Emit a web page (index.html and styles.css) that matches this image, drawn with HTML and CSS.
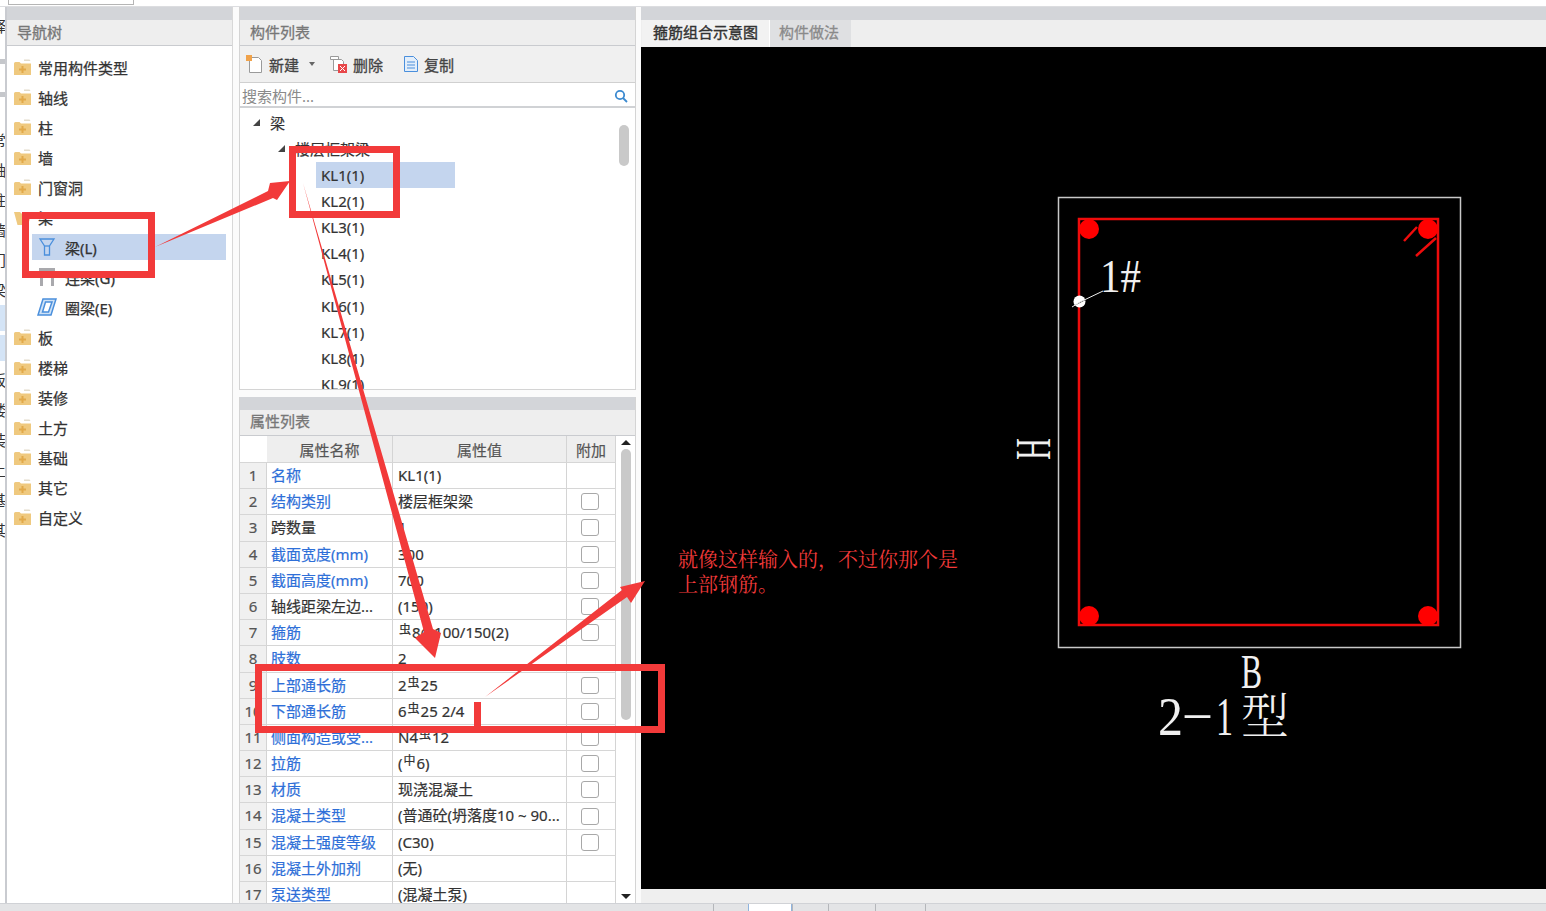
FILE: index.html
```html
<!DOCTYPE html>
<html lang="zh-CN">
<head>
    <meta charset="UTF-8">
    <title>箍筋组合示意图</title>
    <link rel="stylesheet" href="styles.css">
</head>
<body>
    <svg width="0" height="0" class="defs">
        <symbol id="folder" viewBox="0 0 17 16">
            <path d="M10 0.5h5.500l1 1.500h-6.500z" fill="#e3dccb"/>
            <path d="M0 4.500q0-1.500 1.500-1.500h4l1.500 1.500h10v11.500h-17z" fill="#efc97f"/>
            <path d="M7.500 7h2v2.500h2.500v2h-2.500v2.500h-2v-2.500h-2.500v-2h2.500z" fill="#e2a94a"/>
        </symbol>
    </svg>

    <div class="topbar"><div class="topinput"></div></div>

    <div class="main">
        <div class="sliver">
            <span class="sl-char sl-first">释</span>
            <span class="sl-rule"></span>
            <span class="sl-rule"></span>
            <span class="sl-char">常</span>
            <span class="sl-char">轴</span>
            <span class="sl-char">柱</span>
            <span class="sl-char">墙</span>
            <span class="sl-char">门</span>
            <span class="sl-char">梁</span>
            <span class="sl-blue"></span>
            <span class="sl-blue"></span>
            <span class="sl-char">板</span>
            <span class="sl-char">楼</span>
            <span class="sl-char">装</span>
            <span class="sl-char">土</span>
            <span class="sl-char">基</span>
            <span class="sl-char">其</span>
        </div>

        <!-- 导航树 -->
        <div class="panel nav">
            <div class="band"></div>
            <div class="head">导航树</div>
            <div class="nav-list">
                <div class="nav-row"><svg class="folder"><use href="#folder"/></svg>常用构件类型</div>
                <div class="nav-row"><svg class="folder"><use href="#folder"/></svg>轴线</div>
                <div class="nav-row"><svg class="folder"><use href="#folder"/></svg>柱</div>
                <div class="nav-row"><svg class="folder"><use href="#folder"/></svg>墙</div>
                <div class="nav-row"><svg class="folder"><use href="#folder"/></svg>门窗洞</div>
                <div class="nav-row"><svg class="folder" viewBox="0 0 17 16"><path d="M0 3h6l1.500 1.500h7v2h2.500l-3 9.500h-10.500z" fill="#efc97f"/></svg>梁</div>
                <div class="nav-row nav-sub nav-active">
                    <svg class="sub-icon" viewBox="0 0 20 20" fill="none" stroke="#4a8fdc" stroke-width="1.300"><path d="M3 2h14l-4.500 7v9h-5v-9z"/><path d="M7.500 9h5"/></svg>梁(L)
                </div>
                <div class="nav-row nav-sub">
                    <svg class="sub-icon" viewBox="0 0 20 20"><path d="M2 1h16v3h-16zM3 4h3v15h-3zM14 4h3v15h-3z" fill="#a9a9ad"/></svg>连梁(G)
                </div>
                <div class="nav-row nav-sub">
                    <svg class="sub-icon" viewBox="0 0 20 20" fill="#cfe2f6" stroke="#4a8fdc" stroke-width="1.500"><path d="M6 2h13l-5 16h-13z"/><path d="M8.500 5h6.500l-3.500 10h-6z" fill="#fff"/></svg>圈梁(E)
                </div>
                <div class="nav-row"><svg class="folder"><use href="#folder"/></svg>板</div>
                <div class="nav-row"><svg class="folder"><use href="#folder"/></svg>楼梯</div>
                <div class="nav-row"><svg class="folder"><use href="#folder"/></svg>装修</div>
                <div class="nav-row"><svg class="folder"><use href="#folder"/></svg>土方</div>
                <div class="nav-row"><svg class="folder"><use href="#folder"/></svg>基础</div>
                <div class="nav-row"><svg class="folder"><use href="#folder"/></svg>其它</div>
                <div class="nav-row"><svg class="folder"><use href="#folder"/></svg>自定义</div>
            </div>
        </div>

        <div class="middle">
            <!-- 构件列表 -->
            <div class="panel parts">
                <div class="band"></div>
                <div class="head">构件列表</div>
                <div class="toolbar">
                    <span class="tool tool-new">
                        <svg class="tool-icon" viewBox="0 0 18 18" fill="#fff" stroke="#9a9a9a"><path d="M3.500 2.500h9l3 3v12h-12z"/><rect x="0" y="0" width="6" height="6" fill="#f0a24a" stroke="none"/></svg>新建<i class="caret"></i>
                    </span>
                    <span class="tool tool-del">
                        <svg class="tool-icon" viewBox="0 0 18 18" fill="#fff" stroke="#9a9a9a"><path d="M1.500 1.500h8v3h-8zM4.500 4.500h8l2 2v9h-10z"/><rect x="9" y="9" width="9" height="9" fill="#e8474a" stroke="none"/><path d="M11 11l5 5M16 11l-5 5" stroke="#fff"/></svg>删除
                    </span>
                    <span class="tool tool-copy">
                        <svg class="tool-icon" viewBox="0 0 18 18" fill="#e3eefa" stroke="#4a8fdc"><path d="M2.500 1.500h9l4 4v11h-13z"/><path d="M5 7h8M5 10h8M5 13h8" fill="none"/></svg>复制
                    </span>
                </div>
                <div class="search">
                    <span>搜索构件...</span>
                    <svg class="search-icon" viewBox="0 0 14 14" fill="none" stroke="#3b8ad0" stroke-width="1.800"><circle cx="6" cy="6" r="4.200"/><path d="M9 9l4 4"/></svg>
                </div>
                <div class="tree">
                    <div class="tree-row lvl-1"><i class="tri"></i>梁</div>
                    <div class="tree-row lvl-2"><i class="tri"></i>楼层框架梁</div>
                    <div class="tree-row lvl-3"><span class="leaf leaf-on">KL1(1)</span></div>
                    <div class="tree-row lvl-3"><span class="leaf">KL2(1)</span></div>
                    <div class="tree-row lvl-3"><span class="leaf">KL3(1)</span></div>
                    <div class="tree-row lvl-3"><span class="leaf">KL4(1)</span></div>
                    <div class="tree-row lvl-3"><span class="leaf">KL5(1)</span></div>
                    <div class="tree-row lvl-3"><span class="leaf">KL6(1)</span></div>
                    <div class="tree-row lvl-3"><span class="leaf">KL7(1)</span></div>
                    <div class="tree-row lvl-3"><span class="leaf">KL8(1)</span></div>
                    <div class="tree-row lvl-3"><span class="leaf">KL9(1)</span></div>
                    <div class="tree-thumb"></div>
                </div>
            </div>

            <!-- 属性列表 -->
            <div class="panel props">
                <div class="band"></div>
                <div class="head">属性列表</div>
                <div class="prop-wrap">
                    <div class="prop-table">
                        <div class="prop-row prop-head"><div class="c-idx"></div><div>属性名称</div><div>属性值</div><div>附加</div></div>
                        <div class="prop-row"><div class="c-idx">1</div><div class="c-name">名称</div><div class="c-val">KL1(1)</div><div class="c-add"></div></div>
                        <div class="prop-row"><div class="c-idx">2</div><div class="c-name">结构类别</div><div class="c-val">楼层框架梁</div><div class="c-add"><i class="check"></i></div></div>
                        <div class="prop-row"><div class="c-idx">3</div><div class="c-name c-plain">跨数量</div><div class="c-val">1</div><div class="c-add"><i class="check"></i></div></div>
                        <div class="prop-row"><div class="c-idx">4</div><div class="c-name">截面宽度(mm)</div><div class="c-val">300</div><div class="c-add"><i class="check"></i></div></div>
                        <div class="prop-row"><div class="c-idx">5</div><div class="c-name">截面高度(mm)</div><div class="c-val">700</div><div class="c-add"><i class="check"></i></div></div>
                        <div class="prop-row"><div class="c-idx">6</div><div class="c-name c-plain">轴线距梁左边...</div><div class="c-val">(150)</div><div class="c-add"><i class="check"></i></div></div>
                        <div class="prop-row"><div class="c-idx">7</div><div class="c-name">箍筋</div><div class="c-val"><sup class="bar">虫</sup>8@100/150(2)</div><div class="c-add"><i class="check"></i></div></div>
                        <div class="prop-row"><div class="c-idx">8</div><div class="c-name">肢数</div><div class="c-val">2</div><div class="c-add"></div></div>
                        <div class="prop-row"><div class="c-idx">9</div><div class="c-name">上部通长筋</div><div class="c-val">2<sup class="bar">虫</sup>25</div><div class="c-add"><i class="check"></i></div></div>
                        <div class="prop-row"><div class="c-idx">10</div><div class="c-name">下部通长筋</div><div class="c-val">6<sup class="bar">虫</sup>25 2/4</div><div class="c-add"><i class="check"></i></div></div>
                        <div class="prop-row"><div class="c-idx">11</div><div class="c-name">侧面构造或受...</div><div class="c-val">N4<sup class="bar">虫</sup>12</div><div class="c-add"><i class="check"></i></div></div>
                        <div class="prop-row"><div class="c-idx">12</div><div class="c-name">拉筋</div><div class="c-val">(<sup class="bar">中</sup>6)</div><div class="c-add"><i class="check"></i></div></div>
                        <div class="prop-row"><div class="c-idx">13</div><div class="c-name">材质</div><div class="c-val">现浇混凝土</div><div class="c-add"><i class="check"></i></div></div>
                        <div class="prop-row"><div class="c-idx">14</div><div class="c-name">混凝土类型</div><div class="c-val">(普通砼(坍落度10 ~ 90...</div><div class="c-add"><i class="check"></i></div></div>
                        <div class="prop-row"><div class="c-idx">15</div><div class="c-name">混凝土强度等级</div><div class="c-val">(C30)</div><div class="c-add"><i class="check"></i></div></div>
                        <div class="prop-row"><div class="c-idx">16</div><div class="c-name">混凝土外加剂</div><div class="c-val">(无)</div><div class="c-add"></div></div>
                        <div class="prop-row"><div class="c-idx">17</div><div class="c-name">泵送类型</div><div class="c-val">(混凝土泵)</div><div class="c-add"></div></div>
                    </div>
                    <div class="prop-scroll">
                        <i class="arrow-up"></i>
                        <div class="prop-thumb"></div>
                        <i class="arrow-down"></i>
                    </div>
                </div>
            </div>
        </div>

        <!-- 箍筋组合示意图 -->
        <div class="panel drawing">
            <div class="band"></div>
            <div class="tabs">
                <div class="tab tab-on">箍筋组合示意图</div>
                <div class="tab">构件做法</div>
            </div>
            <div class="canvas">
                <svg class="cad" viewBox="641 47 905 842">
                    <rect x="1058.500" y="197.500" width="402" height="450" fill="none" stroke="#c8c8c8" stroke-width="1.500"/>
                    <rect x="1079" y="219" width="359" height="406" fill="none" stroke="#ee0c0c" stroke-width="2.500"/>
                    <circle cx="1089" cy="229" r="10" fill="#f00"/>
                    <circle cx="1428" cy="229" r="10" fill="#f00"/>
                    <circle cx="1089" cy="616" r="10" fill="#f00"/>
                    <circle cx="1428" cy="616" r="10" fill="#f00"/>
                    <path d="M1417 227l-13 14M1436 238l-20 18" stroke="#ee0c0c" stroke-width="2.500"/>
                    <circle cx="1079.500" cy="301.500" r="6" fill="#fff"/>
                    <path d="M1072 307l8-5 23-11" stroke="#eee" stroke-width="1"/>
                    <text class="cad-text" x="1100" y="292" font-size="46" textLength="41" lengthAdjust="spacingAndGlyphs">1#</text>
                    <text class="cad-text" x="1241" y="688" font-size="48" textLength="21" lengthAdjust="spacingAndGlyphs">B</text>
                    <text class="cad-text" x="1158" y="735" font-size="54" textLength="25" lengthAdjust="spacingAndGlyphs">2</text>
                    <text class="cad-text" x="1185" y="729" font-size="54" textLength="25" lengthAdjust="spacingAndGlyphs">–</text>
                    <text class="cad-text" x="1216" y="735" font-size="54" textLength="17" lengthAdjust="spacingAndGlyphs">1</text>
                    <text class="cad-text cad-cjk" x="1241" y="733" font-size="48">型</text>
                    <text class="cad-text" transform="translate(1050 460) rotate(-90)" font-size="50" textLength="22" lengthAdjust="spacingAndGlyphs">H</text>
                </svg>
                <div class="note">就像这样输入的，不过你那个是<br>上部钢筋。</div>
            </div>
            <div class="drawing-foot"></div>
        </div>
    </div>

    <div class="bottombar">
        <span class="bottom-cell cell-30"></span>
        <span class="bottom-cell bottom-tab"></span>
        <span class="bottom-cell cell-36"></span>
        <span class="bottom-cell cell-47"></span>
        <span class="bottom-cell cell-50"></span>
        <span class="bottom-cell cell-95"></span>
    </div>

    <!-- 截图上的红色标注 -->
    <svg class="marks" viewBox="0 0 1546 911">
        <g fill="none" stroke="#f23a3a" stroke-width="7">
            <rect x="25.500" y="215.500" width="126" height="59"/>
            <rect x="292.500" y="149.500" width="104" height="65"/>
            <rect x="258.500" y="667.500" width="403" height="62"/>
        </g>
        <g fill="#f23a3a">
            <rect x="474" y="702" width="7" height="28"/>
            <polygon points="155,247 268,191 270,183 290,181 277,200 273,198"/>
            <polygon points="303,183 424,632 415,638 435,658 441,633 433,629"/>
            <polygon points="485,697 622,590 620,587 645,581 631,603 627,597"/>
        </g>
    </svg>
</body>
</html>
```
FILE: styles.css
```css
* { margin: 0; padding: 0; box-sizing: border-box; }
body {
    width: 1546px;
    height: 911px;
    overflow: hidden;
    position: relative;
    background: #fff;
    color: #333;
    font-family: "Noto Sans", "Noto Sans CJK SC", sans-serif;
    font-size: 15px;
}
.defs { position: absolute; }

.topbar {
    height: 7px;
    background: #fff;
    border-bottom: 1px solid #dcdde0;
    padding-left: 8px;
}
.topinput {
    width: 126px;
    height: 5px;
    background: #fff;
    border: 1px solid #b5b5b5;
    border-top: none;
}

.main { display: flex; height: 896px; background: #fbfbfb; }

.sliver {
    width: 7px;
    flex-shrink: 0;
    border-right: 2px solid #c9cbd0;
    background: #fff;
    overflow: hidden;
    display: flex;
    flex-direction: column;
}
.sl-char {
    height: 30px;
    flex-shrink: 0;
    line-height: 30px;
    text-indent: -9px;
    white-space: nowrap;
    color: #333;
}
.sl-first { margin-top: 4px; margin-bottom: 18px; }
.sl-rule { height: 5px; flex-shrink: 0; background: #c5c7cb; margin-bottom: 28px; }
.sl-blue { height: 26px; flex-shrink: 0; background: #d4e4f6; margin-bottom: 4px; }

.panel { display: flex; flex-direction: column; background: #fff; }
.band { height: 13px; flex-shrink: 0; background: #d3d5d9; }
.head {
    height: 26px;
    flex-shrink: 0;
    line-height: 25px;
    padding-left: 10px;
    background: #eeeeee;
    border-bottom: 1px solid #c9cbcf;
    color: #777;
    -webkit-text-stroke: 0.3px #777;
}
.props .head { line-height: 23px; }

/* nav */
.nav { width: 226px; margin-right: 6px; border-right: 1px solid #d8d8d8; }
.nav-list { padding-top: 6px; flex: 1; }
.nav-row {
    height: 30px;
    display: flex;
    align-items: center;
    padding-left: 7px;
    -webkit-text-stroke: 0.25px #333;
}
.folder { width: 17px; height: 16px; margin-right: 7px; flex-shrink: 0; }
.nav-sub { padding-left: 30px; margin-right: 6px; }
.nav-active { height: 26px; margin: 2px 6px 2px 25px; padding-left: 5px; background: #c4d5ee; }
.sub-icon { width: 20px; height: 20px; margin-right: 8px; flex-shrink: 0; }

/* middle column */
.middle { width: 397px; flex-shrink: 0; margin-right: 5px; display: flex; flex-direction: column; gap: 7px; }
.parts { height: 383px; border: 1px solid #d4d4d4; border-top: none; }
.props { flex: 1; min-height: 0; border-left: 1px solid #d4d4d4; border-right: 1px solid #d4d4d4; }

.toolbar {
    height: 37px;
    flex-shrink: 0;
    background: #f0f0f0;
    display: flex;
    align-items: center;
    padding-left: 6px;
    border-bottom: 1px solid #d0d0d0;
    color: #444;
    -webkit-text-stroke: 0.3px #444;
}
.tool { display: flex; align-items: center; }
.tool-icon { width: 18px; height: 18px; margin-right: 4px; }
.tool-new { margin-right: 14px; }
.tool-new .tool-icon { margin-right: 5px; }
.tool-del { margin-right: 19px; }
.tool-del .tool-icon { margin-right: 6px; }
.caret {
    width: 0;
    height: 0;
    margin-left: 10px;
    border: 3.500px solid transparent;
    border-top: 4px solid #666;
    border-bottom: none;
}

.search {
    height: 25px;
    flex-shrink: 0;
    display: flex;
    align-items: center;
    justify-content: space-between;
    padding: 2px 7px 0 2px;
    border-bottom: 2px solid #d0d2d5;
    color: #8a8a8a;
}
.search-icon { width: 14px; height: 14px; }

.tree { flex: 1; min-height: 0; overflow: hidden; position: relative; padding-top: 1px; }
.tree-row { height: 26.200px; display: flex; align-items: center; white-space: nowrap; -webkit-text-stroke: 0.2px #333; }
.tree-row.lvl-1 { height: 26.400px; }
.lvl-1 { padding-left: 13px; }
.lvl-2 { padding-left: 38px; }
.lvl-3 { padding-left: 76px; }
.tri {
    width: 0;
    height: 0;
    margin-right: 10px;
    border-bottom: 7px solid #444;
    border-left: 7px solid transparent;
}
.leaf { display: block; width: 139px; height: 26.200px; line-height: 26px; padding-left: 5px; }
.leaf-on { background: #c4d5ee; }
.tree-thumb {
    position: absolute;
    left: 379px;
    top: 17px;
    width: 10px;
    height: 41px;
    border-radius: 5px;
    background: #c9c9c9;
}

.prop-wrap { flex: 1; min-height: 0; display: flex; }
.prop-table { width: 376px; flex-shrink: 0; overflow: hidden; }
.prop-row {
    display: grid;
    grid-template-columns: 27px 126px 174px 49px;
    height: 26.200px;
    line-height: 25px;
    border-bottom: 1px solid #d6d6d6;
    white-space: nowrap;
}
.prop-row > div { border-right: 1px solid #d4d4d4; overflow: hidden; }
.prop-row:not(.prop-head) > div { -webkit-text-stroke: 0.2px currentColor; }
.prop-head {
    height: 27px;
    line-height: 29px;
    background: #eeeeee;
    color: #555;
    text-align: center;
    -webkit-text-stroke: 0.2px #555;
}
.prop-head .c-idx { background: #fff; border-right: none; }
.c-idx { background: #f0f0f0; color: #555; text-align: center; }
.c-name { padding-left: 4px; color: #2e6fd8; }
.c-name.c-plain { color: #333; }
.c-val { padding-left: 5px; }
.c-add { display: flex; align-items: center; justify-content: center; padding-right: 3px; }
.check {
    width: 18px;
    height: 17px;
    background: #fff;
    border: 1px solid #a8a8a8;
    border-radius: 3px;
}
.bar { font-size: 12px; line-height: 0; vertical-align: 4px; margin: 0 1px; }

.prop-scroll { flex: 1; position: relative; }
.prop-thumb {
    position: absolute;
    left: 5px;
    top: 13px;
    width: 10px;
    height: 271px;
    border-radius: 5px;
    background: #c9c9c9;
}
.arrow-up, .arrow-down {
    position: absolute;
    left: 5px;
    width: 0;
    height: 0;
    border-left: 5.500px solid transparent;
    border-right: 5.500px solid transparent;
}
.arrow-up { top: 4px; border-bottom: 5px solid #222; }
.arrow-down { top: 458px; border-top: 5px solid #222; }

/* drawing */
.drawing { flex: 1; min-width: 0; }
.tabs {
    height: 27px;
    flex-shrink: 0;
    display: flex;
    background: #eeeeee;
    padding-left: 1px;
}
.tab {
    width: 82px;
    padding-left: 9px;
    line-height: 25px;
    white-space: nowrap;
    background: #dfe0e2;
    color: #8a8a8a;
    border-left: 1px solid #fff;
    -webkit-text-stroke: 0.3px #8a8a8a;
}
.tab.tab-on {
    width: 127px;
    padding-left: 11px;
    background: #f2f2f2;
    color: #333;
    border-left: none;
    -webkit-text-stroke: 0.4px #333;
}
.canvas { height: 842px; flex-shrink: 0; background: #000; position: relative; }
.cad { display: block; width: 905px; height: 842px; }
.cad-text { font-family: "Liberation Serif", serif; fill: #f0f0f0; }
.cad-cjk { font-family: "Noto Serif CJK SC", "Noto Sans CJK SC", serif; font-weight: 300; }
.note {
    position: absolute;
    left: 37px;
    top: 499px;
    font-family: "Noto Serif CJK SC", "Noto Sans CJK SC", serif;
    font-size: 20px;
    line-height: 25px;
    color: #f23a3a;
    white-space: nowrap;
}
.drawing-foot { flex: 1; background: #efefef; }

.bottombar {
    height: 8px;
    display: flex;
    background: #e3e4e6;
    border-top: 1px solid #d0d2d6;
    padding-left: 713px;
}
.bottom-cell { display: block; height: 7px; border-left: 1px solid #b4b6ba; }
.cell-30 { width: 35px; }
.bottom-tab { width: 44px; background: #fff; border-left: 1px solid #8fb4de; border-right: 1px solid #8fb4de; }
.cell-36 { width: 36px; }
.cell-47 { width: 47px; }
.cell-50 { width: 50px; }
.cell-95 { width: 95px; }

.marks { position: absolute; left: 0; top: 0; width: 1546px; height: 911px; pointer-events: none; }
```
